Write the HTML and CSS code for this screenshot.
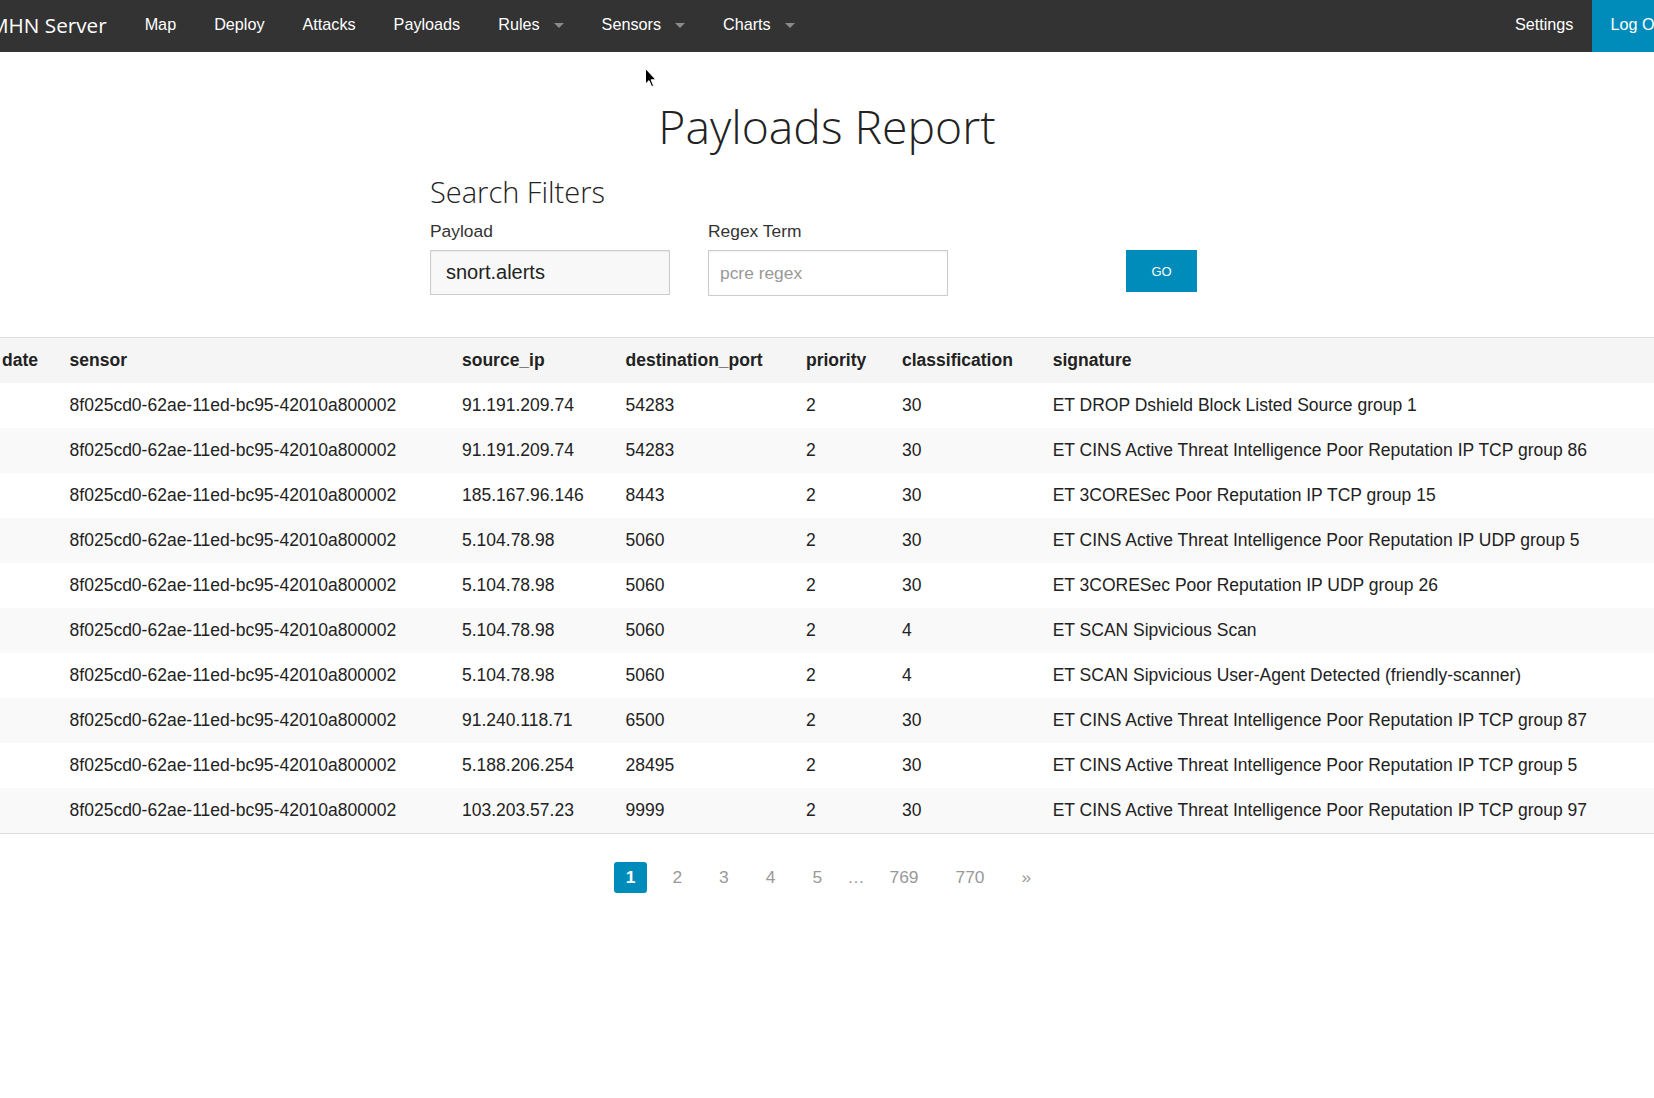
FILE: index.html
```html
<!DOCTYPE html>
<html lang="en">
<head>
<meta charset="utf-8">
<title>Payloads Report - MHN Server</title>
<link rel="stylesheet" href="styles.css">
</head>
<body>
<nav class="topbar">
  <a class="brand" href="#">MHN Server</a>
  <ul class="nav-left">
    <li><a href="#">Map</a></li>
    <li><a href="#">Deploy</a></li>
    <li><a href="#">Attacks</a></li>
    <li><a href="#">Payloads</a></li>
    <li><a href="#" class="has-dropdown">Rules<span class="caret"></span></a></li>
    <li><a href="#" class="has-dropdown">Sensors<span class="caret"></span></a></li>
    <li><a href="#" class="has-dropdown">Charts<span class="caret"></span></a></li>
  </ul>
  <ul class="nav-right">
    <li><a href="#">Settings</a></li>
    <li><a href="#" class="logout">Log Out</a></li>
  </ul>
</nav>

<main>
  <h1 class="report-title">Payloads Report</h1>

  <section class="filters">
    <h2 class="filters-title">Search Filters</h2>
    <form class="filter-row">
      <div class="field">
        <label class="field-label" for="payload">Payload</label>
        <input class="input input-payload" id="payload" type="text" value="snort.alerts">
      </div>
      <div class="field">
        <label class="field-label" for="regex">Regex Term</label>
        <input class="input input-regex" id="regex" type="text" placeholder="pcre regex">
      </div>
      <div class="go-cell">
        <button class="go-btn" type="button">GO</button>
      </div>
    </form>
  </section>

  <table class="report-table">
    <thead>
      <tr>
        <th class="c-date">date</th>
        <th class="c-sensor">sensor</th>
        <th class="c-ip">source_ip</th>
        <th class="c-port">destination_port</th>
        <th class="c-prio">priority</th>
        <th class="c-class">classification</th>
        <th class="c-sig">signature</th>
      </tr>
    </thead>
    <tbody>
      <tr><td></td><td>8f025cd0-62ae-11ed-bc95-42010a800002</td><td>91.191.209.74</td><td>54283</td><td>2</td><td>30</td><td>ET DROP Dshield Block Listed Source group 1</td></tr>
      <tr><td></td><td>8f025cd0-62ae-11ed-bc95-42010a800002</td><td>91.191.209.74</td><td>54283</td><td>2</td><td>30</td><td>ET CINS Active Threat Intelligence Poor Reputation IP TCP group 86</td></tr>
      <tr><td></td><td>8f025cd0-62ae-11ed-bc95-42010a800002</td><td>185.167.96.146</td><td>8443</td><td>2</td><td>30</td><td>ET 3CORESec Poor Reputation IP TCP group 15</td></tr>
      <tr><td></td><td>8f025cd0-62ae-11ed-bc95-42010a800002</td><td>5.104.78.98</td><td>5060</td><td>2</td><td>30</td><td>ET CINS Active Threat Intelligence Poor Reputation IP UDP group 5</td></tr>
      <tr><td></td><td>8f025cd0-62ae-11ed-bc95-42010a800002</td><td>5.104.78.98</td><td>5060</td><td>2</td><td>30</td><td>ET 3CORESec Poor Reputation IP UDP group 26</td></tr>
      <tr><td></td><td>8f025cd0-62ae-11ed-bc95-42010a800002</td><td>5.104.78.98</td><td>5060</td><td>2</td><td>4</td><td>ET SCAN Sipvicious Scan</td></tr>
      <tr><td></td><td>8f025cd0-62ae-11ed-bc95-42010a800002</td><td>5.104.78.98</td><td>5060</td><td>2</td><td>4</td><td>ET SCAN Sipvicious User-Agent Detected (friendly-scanner)</td></tr>
      <tr><td></td><td>8f025cd0-62ae-11ed-bc95-42010a800002</td><td>91.240.118.71</td><td>6500</td><td>2</td><td>30</td><td>ET CINS Active Threat Intelligence Poor Reputation IP TCP group 87</td></tr>
      <tr><td></td><td>8f025cd0-62ae-11ed-bc95-42010a800002</td><td>5.188.206.254</td><td>28495</td><td>2</td><td>30</td><td>ET CINS Active Threat Intelligence Poor Reputation IP TCP group 5</td></tr>
      <tr><td></td><td>8f025cd0-62ae-11ed-bc95-42010a800002</td><td>103.203.57.23</td><td>9999</td><td>2</td><td>30</td><td>ET CINS Active Threat Intelligence Poor Reputation IP TCP group 97</td></tr>
    </tbody>
  </table>

  <ul class="pagination">
    <li><a href="#" class="page current">1</a></li>
    <li><a href="#" class="page">2</a></li>
    <li><a href="#" class="page">3</a></li>
    <li><a href="#" class="page">4</a></li>
    <li><a href="#" class="page">5</a></li>
    <li><span class="page ellipsis">&hellip;</span></li>
    <li><a href="#" class="page">769</a></li>
    <li><a href="#" class="page">770</a></li>
    <li><a href="#" class="page">&raquo;</a></li>
  </ul>
</main>

<svg class="cursor" width="12" height="20" viewBox="0 0 12 20" aria-hidden="true">
  <path d="M0.5 0.5 L0.5 16 L4 12.6 L6.6 18.6 L8.6 17.7 L6.1 11.8 L10.9 11.8 Z" fill="#000" stroke="#fff" stroke-width="1"/>
</svg>
</body>
</html>
```

FILE: styles.css
```css
html, body {
  margin: 0;
  padding: 0;
  background: #fff;
}

body {
  font-family: "Liberation Sans", Arial, sans-serif;
  color: #222;
  overflow: hidden;
  position: relative;
  min-height: 1098px;
}

a {
  text-decoration: none;
}

ul {
  list-style: none;
  margin: 0;
  padding: 0;
}

/* ---------- top bar ---------- */
.topbar {
  display: flex;
  align-items: stretch;
  height: 52px;
  background: #333;
  margin-left: -10px;
  margin-right: -32px;
}

.brand {
  display: flex;
  align-items: center;
  font-family: "Open Sans", sans-serif;
  font-size: 20.7px;
  color: #fff;
  padding: 0 19px 3px 0;
}

.nav-left, .nav-right {
  display: flex;
  align-items: stretch;
}

.nav-right {
  margin-left: auto;
}

.nav-left a, .nav-right a {
  display: flex;
  align-items: center;
  height: 100%;
  padding: 0 19px 3px;
  box-sizing: border-box;
  font-size: 16.2px;
  color: #fff;
}

.caret {
  display: inline-block;
  width: 0;
  height: 0;
  margin-left: 14px;
  margin-top: 1px;
  border-left: 5px solid transparent;
  border-right: 5px solid transparent;
  border-top: 5px solid #8a8a8a;
}

.nav-right .logout {
  background: #008cba;
  padding: 0 18px 3px;
}

/* ---------- headings & filters ---------- */
.report-title {
  font-family: "Open Sans", sans-serif;
  font-weight: 300;
  font-size: 46.3px;
  line-height: 64px;
  text-align: center;
  color: #222;
  margin: 43px 0 0;
}

.filters {
  width: 794px;
  margin: 0 auto;
}

.filters-title {
  font-family: "Open Sans", sans-serif;
  font-weight: 300;
  font-size: 29px;
  line-height: 40px;
  color: #222;
  margin: 13px 0 0;
}

.filter-row {
  display: flex;
  align-items: flex-start;
  gap: 38px;
  margin: 9px 0 0;
}

.field {
  display: flex;
  flex-direction: column;
  width: 240px;
}

.field-label {
  font-size: 17.4px;
  line-height: 20px;
  color: #333;
  margin-bottom: 9px;
}

.input {
  box-sizing: border-box;
  width: 240px;
  height: 45px;
  border: 1px solid #cccccc;
  border-radius: 0;
  font-family: "Liberation Sans", Arial, sans-serif;
  color: #222;
  outline: none;
  margin: 0;
  box-shadow: inset 0 1px 2px rgba(0, 0, 0, 0.06);
}

.input-payload {
  background: #f8f8f8;
  font-size: 20px;
  padding: 0 0 0 15px;
}

.input-regex {
  background: #fff;
  font-size: 17.4px;
  padding: 0 0 0 11px;
  height: 46px;
}

.input-regex::placeholder {
  color: #999;
}

.go-cell {
  margin-left: 140px;
  padding-top: 29px;
}

.go-btn {
  width: 71px;
  height: 42px;
  border: none;
  background: #008cba;
  color: #fff;
  font-family: "Liberation Sans", Arial, sans-serif;
  font-size: 13px;
  padding: 0;
  cursor: pointer;
}

/* ---------- table ---------- */
.report-table {
  width: 100%;
  table-layout: fixed;
  border-collapse: collapse;
  margin-top: 41px;
  border-top: 1px solid #dddddd;
  border-bottom: 1px solid #dddddd;
  font-size: 17.5px;
  color: #222;
}

.report-table th,
.report-table td {
  height: 45px;
  padding: 0 10px;
  text-align: left;
  vertical-align: middle;
  white-space: nowrap;
  overflow: hidden;
}

.report-table th:first-child,
.report-table td:first-child {
  padding-left: 2px;
}

.report-table th {
  font-weight: bold;
}

.report-table thead tr {
  background: #f5f5f5;
}

.report-table tbody tr:nth-child(even) {
  background: #f9f9f9;
}

/* widths are content widths; padding is added by the table */
.c-date   { width: 47.6px; }
.c-sensor { width: 372.4px; }
.c-ip     { width: 143.5px; }
.c-port   { width: 160.5px; }
.c-prio   { width: 76px; }
.c-class  { width: 130.7px; }
.c-sig    { width: auto; }

/* ---------- pagination ---------- */
.pagination {
  display: flex;
  justify-content: center;
  gap: 13px;
  margin-top: 28px;
  padding-left: 3px;
}

.page {
  display: block;
  height: 31px;
  line-height: 31px;
  padding: 0 12px;
  font-size: 17.4px;
  color: #999;
  border-radius: 3px;
}

.page.current {
  background: #008cba;
  color: #fff;
  font-weight: bold;
}

.page.ellipsis {
  padding: 0;
}

/* ---------- mouse pointer overlay ---------- */
.cursor {
  position: absolute;
  left: 645px;
  top: 68px;
}
```
